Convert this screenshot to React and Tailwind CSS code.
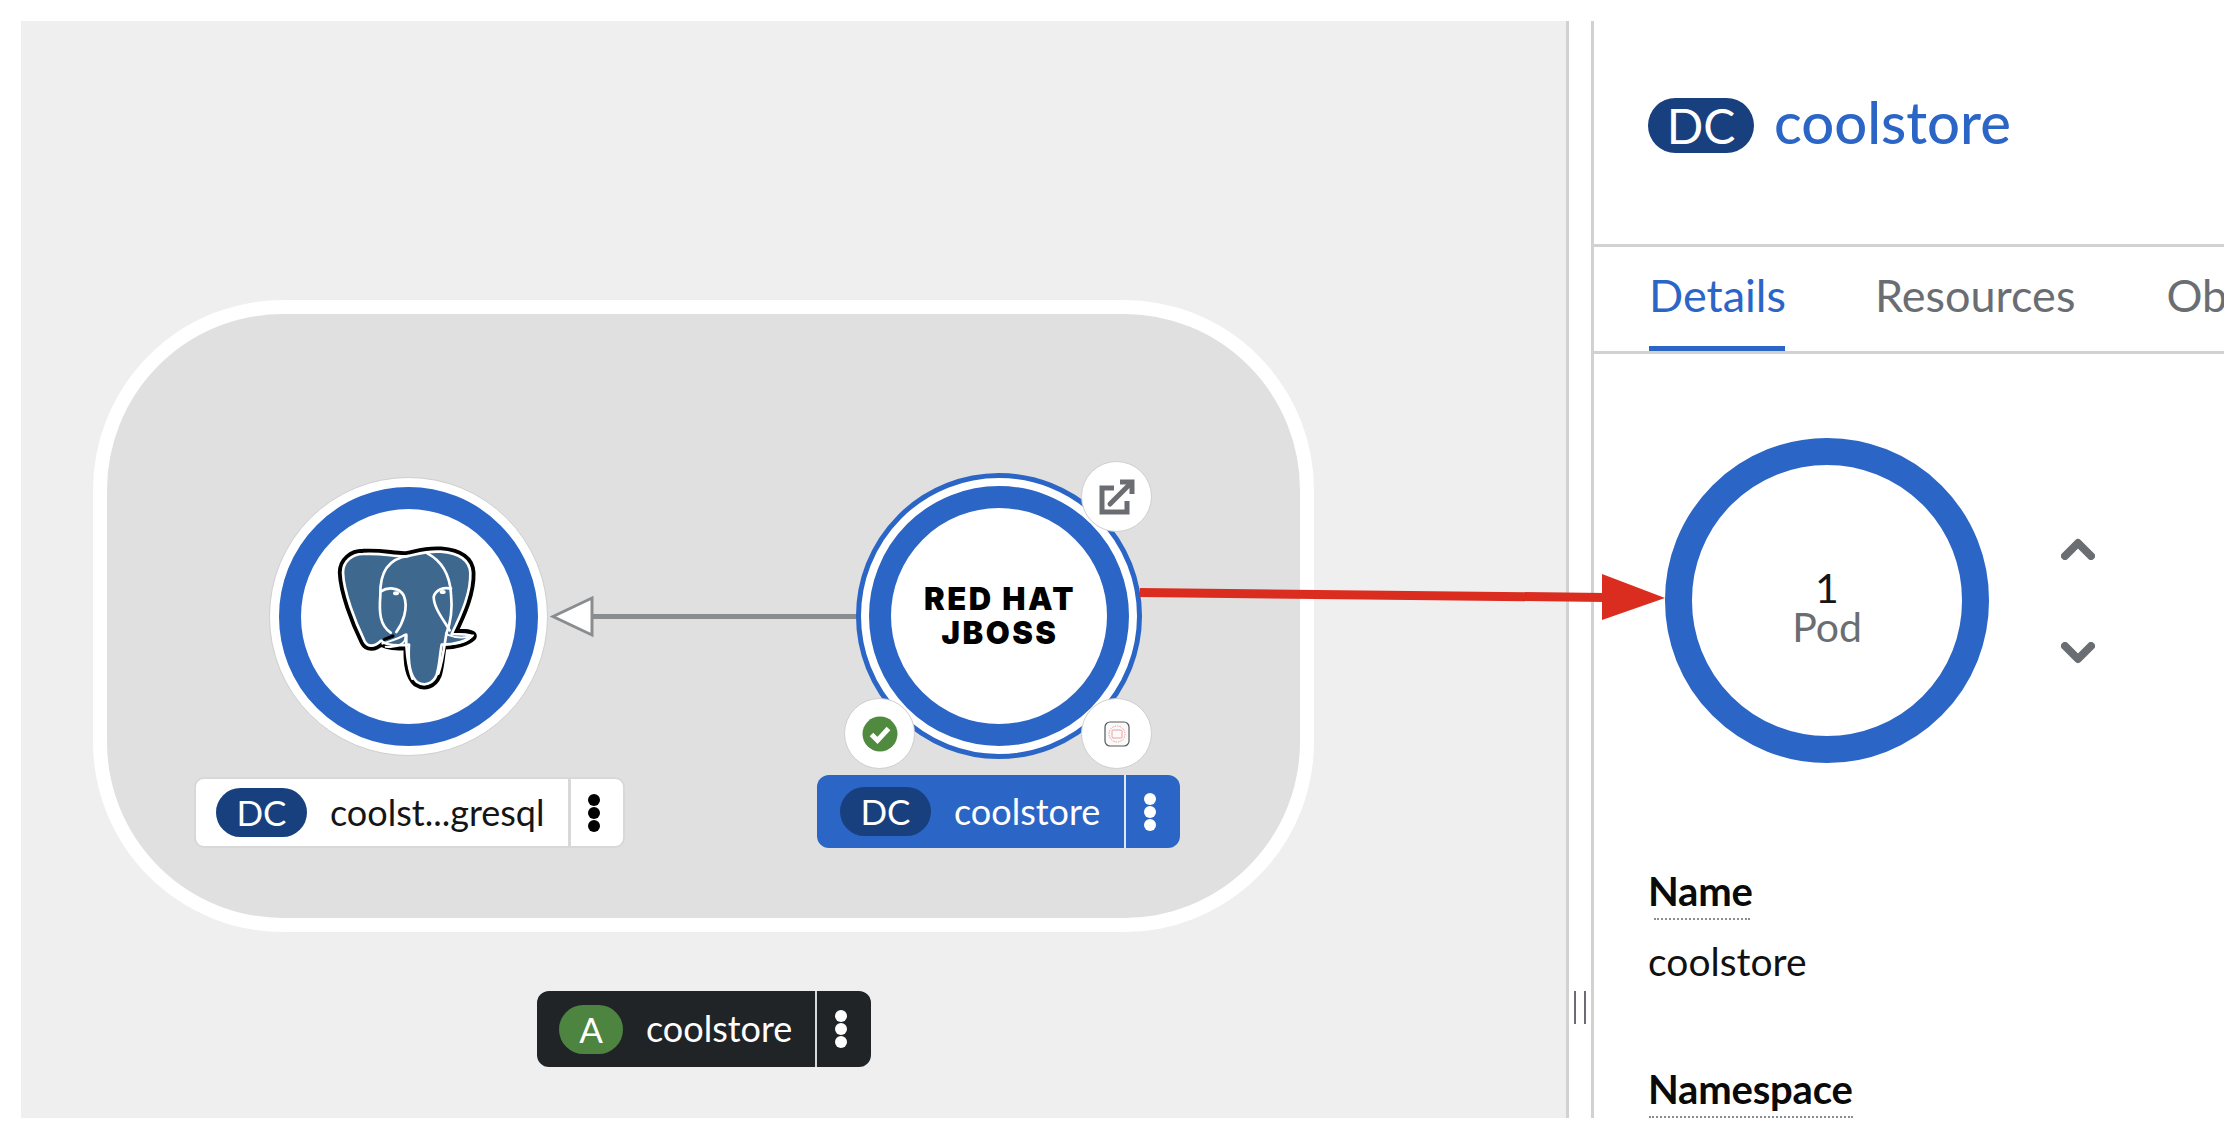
const font = "font-['Lato','Liberation_Sans',sans-serif]";

function Dots() {
  return (
    <span className="flex flex-col gap-[1px] -ml-[6px]">
      <span className="w-3 h-3 rounded-full bg-current" />
      <span className="w-3 h-3 rounded-full bg-current" />
      <span className="w-3 h-3 rounded-full bg-current" />
    </span>
  );
}

function Elephant() {
  const body =
    "M132 66 C100 66 72 88 72 122 C74 180 108 268 137 328 C146 345 165 346 186 326 C198 338 230 342 270 338 C266 395 274 432 294 450 C316 464 342 456 353 428 C362 400 362 370 368 338 C410 338 445 325 458 312 C450 306 430 306 398 306 C430 240 456 180 454 122 C451 80 415 63 365 59 C320 56 290 68 262 73 C225 75 190 62 132 66Z";
  return (
    <svg viewBox="0 0 540 510" className="w-[180px] h-[170px]" fill="none" strokeLinecap="round" strokeLinejoin="round">
      <path d={body} fill="#000" stroke="#000" strokeWidth="31" />
      <path d={body} fill="#3f688f" stroke="#fff" strokeWidth="8" />
      {/* head, trunk and eyes */}
      <path d="M268 72 C205 80 182 125 184 190 C180 240 182 280 215 302" stroke="#fff" strokeWidth="8" />
      <path d="M325 64 C365 85 392 125 396 185 C400 225 398 265 382 305" stroke="#fff" strokeWidth="8" />
      <path d="M186 178 C205 165 240 165 254 190 C270 230 250 275 232 300" stroke="#fff" strokeWidth="8" />
      <path d="M396 170 C375 165 350 172 344 195 C345 230 375 265 392 295" stroke="#fff" strokeWidth="8" />
      <path d="M262 308 C260 345 266 400 280 440" stroke="#fff" strokeWidth="8" />
      <path d="M382 305 C376 345 370 390 358 425" stroke="#fff" strokeWidth="8" />
      <path d="M190 335 C208 328 238 322 258 308 C266 332 235 350 200 344" stroke="#fff" strokeWidth="6" />
      <path d="M384 308 C410 318 440 318 462 310 C446 328 412 338 376 338" stroke="#fff" strokeWidth="6" />
      <path d="M196 322 L222 312" stroke="#000" strokeWidth="9" />
      <ellipse cx="231" cy="184" rx="9" ry="6" fill="#fff" />
      <ellipse cx="371" cy="180" rx="9" ry="6" fill="#fff" />
    </svg>
  );
}

function Decorator({ className, children }) {
  return (
    <div className={`absolute w-[71px] h-[71px] rounded-full bg-white border border-[#cfcfcf] flex items-center justify-center ${className}`}>
      {children}
    </div>
  );
}

function Field({ label, value, dotted, className }) {
  return (
    <div className={className}>
      <p className="text-[40px] leading-[42px] font-bold text-[#0a0a0a] tracking-[-0.2px]">{label}</p>
      <div className={`h-0 border-t-2 border-dotted border-[#8a8d90] mt-[6px] ${dotted}`} />
      {value && <p className="text-[39px] leading-[42px] text-[#111] mt-[20px]">{value}</p>}
    </div>
  );
}

export default function App() {
  return (
    <div className={`relative w-[2238px] h-[1130px] bg-white overflow-hidden flex pt-[21px] pb-[12px] pl-[21px] pr-[14px] ${font}`}>
      {/* topology canvas */}
      <div className="relative w-[1548px] h-full bg-[#efefef] border-r-[3px] border-[#d2d2d2] shrink-0">
        <div className="absolute left-[72px] top-[279px] w-[1221px] h-[632px] rounded-[190px] bg-[#e0e0e0] border-[14px] border-white" />

        <svg className="absolute left-[500px] top-[560px] w-[360px] h-[70px]" viewBox="0 0 360 70" fill="none">
          <path d="M71 35.5H336" stroke="#8a8d90" strokeWidth="5" />
          <path d="M32 35.5L71 17V54Z" fill="#fff" stroke="#8a8d90" strokeWidth="3" />
        </svg>

        {/* postgres node */}
        <div className="absolute left-[248px] top-[456px] w-[279px] h-[279px] rounded-full bg-white border border-[#cfcfcf] flex items-center justify-center">
          <div className="w-[259px] h-[259px] rounded-full border-[22px] border-[#2b65c6] flex items-center justify-center">
            <Elephant />
          </div>
        </div>
        <div className="absolute left-[173px] top-[756px] w-[431px] h-[71px] bg-white border-2 border-[#d8d8d8] rounded-[10px] flex items-center">
          <span className="ml-[20px] w-[91px] h-[49px] rounded-full bg-[#19407e] text-white text-[35px] flex items-center justify-center">DC</span>
          <span className="ml-[23px] -mt-[2px] text-[36px] text-[#151515] w-[238px]">coolst...gresql</span>
          <span className="w-[3px] h-full bg-[#d8d8d8]" />
          <span className="flex-1 flex justify-center text-black"><Dots /></span>
        </div>

        {/* coolstore node */}
        <div className="absolute left-[835px] top-[452px] w-[286px] h-[286px] rounded-full bg-white border-[5px] border-[#2b65c6] flex items-center justify-center">
          <div className="w-[260px] h-[260px] rounded-full border-[22px] border-[#2b65c6] flex items-center justify-center">
            <p className="text-center pl-[2px] text-[31px] leading-[34px] font-black tracking-[2.5px] text-black font-['Inter',sans-serif]">RED HAT<br />JBOSS</p>
          </div>
        </div>
        <Decorator className="left-[1060px] top-[440px]">
          <svg width="36" height="36" viewBox="0 0 36 36" fill="none" stroke="#6a6e73" strokeWidth="5">
            <path d="M15 9H3V33H28V22" />
            <path d="M11 25L32 4" strokeLinecap="round" />
            <path d="M21 3H33V15" />
          </svg>
        </Decorator>
        <Decorator className="left-[823px] top-[677px]">
          <svg width="36" height="36" viewBox="0 0 36 36">
            <circle cx="18" cy="18" r="17.5" fill="#4f8a3f" />
            <path d="M9.5 18.5L15.5 24.5L26.5 12.5" fill="none" stroke="#fff" strokeWidth="5" />
          </svg>
        </Decorator>
        <Decorator className="left-[1060px] top-[677px]">
          <svg width="26" height="26" viewBox="0 0 26 26" fill="none">
            <rect x="1" y="1" width="24" height="24" rx="5" fill="#fafafa" stroke="#55585c" strokeWidth="1.2" />
            <circle cx="13" cy="13" r="8" stroke="#ee9a9a" strokeWidth="1" strokeDasharray="1.5 1" />
            <rect x="8" y="9" width="10" height="8" rx="1" stroke="#e88" strokeWidth="0.8" />
          </svg>
        </Decorator>
        <div className="absolute left-[796px] top-[754px] w-[363px] h-[73px] bg-[#2b65c6] rounded-xl flex items-center text-white">
          <span className="ml-[23px] w-[91px] h-[49px] rounded-full bg-[#19407e] text-[35px] flex items-center justify-center">DC</span>
          <span className="ml-[23px] -mt-[2px] text-[36px] w-[170px]">coolstore</span>
          <span className="w-[2px] h-full bg-[#dfe7f5]" />
          <span className="flex-1 flex justify-center"><Dots /></span>
        </div>

        {/* application group label */}
        <div className="absolute left-[516px] top-[970px] w-[334px] h-[76px] bg-[#212427] rounded-xl flex items-center text-white">
          <span className="ml-[22px] w-[64px] h-[49px] rounded-full bg-[#4d8440] text-[35px] flex items-center justify-center">A</span>
          <span className="ml-[23px] -mt-[2px] text-[36px] w-[169px]">coolstore</span>
          <span className="w-[2px] h-full bg-[#d8d8d8]" />
          <span className="flex-1 flex justify-center"><Dots /></span>
        </div>

        {/* drawer grip */}
        <div className="absolute -right-[20px] top-[970px] w-[12px] h-[33px] border-x-2 border-[#6a6e73]" />
      </div>

      <div className="w-[22px] shrink-0" />

      {/* side panel */}
      <div className="flex-1 min-w-0 border-l-[3px] border-[#d2d2d2] overflow-hidden">
        <div className="h-[226px] flex items-start pt-[77px] pl-[54px] border-b-[3px] border-[#d2d2d2]">
          <span className="w-[106px] h-[55px] rounded-full bg-[#19407e] text-white text-[48px] flex items-center justify-center">DC</span>
          <span className="ml-[20px] -mt-[4px] text-[#2b65c6] text-[58px] leading-[55px] font-medium">coolstore</span>
        </div>
        <div className="h-[107px] flex pl-[55px] border-b-[3px] border-[#d2d2d2] text-[45px] leading-[54px] whitespace-nowrap">
          <div className="w-[136px] border-b-[5px] border-[#2b65c6] text-[#2b65c6] pt-[21px] text-center">Details</div>
          <div className="ml-[90px] text-[#6a6e73] pt-[21px]">Resources</div>
          <div className="ml-[91px] text-[#6a6e73] pt-[21px]">Observe</div>
        </div>

        <div className="flex items-center pl-[71px] pt-[84px]">
          <div className="w-[324px] h-[325px] rounded-full border-[27px] border-[#2b65c6] flex flex-col items-center justify-center pt-[14px]">
            <span className="text-[41px] leading-[38px] text-[#151515]">1</span>
            <span className="text-[41px] leading-[40px] text-[#6a6e73]">Pod</span>
          </div>
          <div className="ml-[72px] flex flex-col gap-[82px] text-[#6a6e73]">
            <svg width="34" height="22" viewBox="0 0 34 22" fill="none" stroke="currentColor" strokeWidth="8" strokeLinecap="round" strokeLinejoin="round">
              <path d="M4 18L17 5L30 18" />
            </svg>
            <svg width="34" height="22" viewBox="0 0 34 22" fill="none" stroke="currentColor" strokeWidth="8" strokeLinecap="round" strokeLinejoin="round">
              <path d="M4 4L17 17L30 4" />
            </svg>
          </div>
        </div>

        <div className="pl-[54px] pt-[107px]">
          <Field label="Name" value="coolstore" dotted="w-[96px] ml-[6px]" />
          <Field label="Namespace" dotted="w-[204px] ml-[1px]" className="mt-[86px]" />
        </div>
      </div>

      {/* annotation arrow */}
      <svg className="absolute left-0 top-0 w-full h-full pointer-events-none" viewBox="0 0 2238 1130" fill="none">
        <path d="M1140 592.5L1606 597.5" stroke="#da2c1f" strokeWidth="9" />
        <path d="M1602 574L1665 598L1602 620Z" fill="#da2c1f" />
      </svg>
    </div>
  );
}
